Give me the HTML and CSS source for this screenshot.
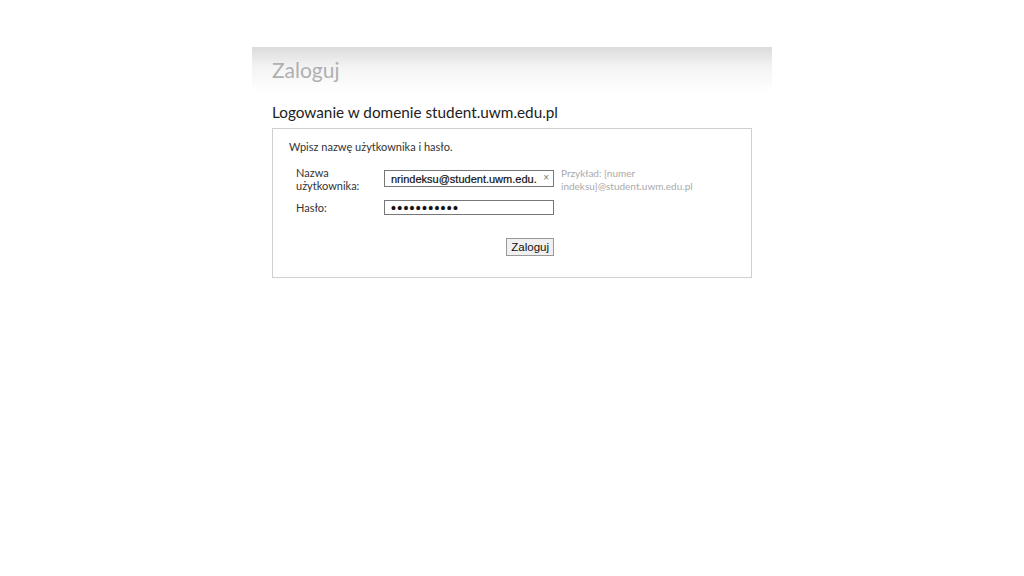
FILE: index.html
```html
<!DOCTYPE html>
<html lang="pl">
<head>
  <meta charset="UTF-8">
  <title>Zaloguj</title>
  <link rel="stylesheet" href="styles.css">
</head>
<body>

<div class="page">
  <div class="header">Zaloguj</div>

  <div class="content">
    <h2>Logowanie w domenie student.uwm.edu.pl</h2>

    <div class="box">
      <p class="intro">Wpisz nazwę użytkownika i hasło.</p>

      <div class="row">
        <label class="label" for="user">Nazwa<br>użytkownika:</label>
        <div class="field">
          <input type="text" id="user" value="nrindeksu@student.uwm.edu.pl">
          <span class="clear">×</span>
        </div>
        <div class="hint">Przykład: [numer<br>indeksu]@student.uwm.edu.pl</div>
      </div>

      <div class="row row-center">
        <label class="label" for="pass">Hasło:</label>
        <div class="field">
          <input type="password" id="pass" value="haslohaslo1">
        </div>
      </div>

      <div class="actions">
        <button type="submit">Zaloguj</button>
      </div>
    </div>
  </div>
</div>

</body>
</html>
```

FILE: styles.css
```css
* {
  box-sizing: border-box;
}
body {
  margin: 0;
  background: #fff;
  font-family: Lato, "Noto Sans", sans-serif;
  color: #222;
}
.page {
  width: 520px;
  margin: 47px auto 0;
}
.header {
  height: 46px;
  padding: 10px 20px 0;
  background: linear-gradient(to bottom, #dcdcdc 0%, #f4f4f4 45%, #fff 100%);
  font-size: 21px;
  color: #b0b0b0;
}
.content {
  padding: 0 20px;
}
h2 {
  margin: 10px 0 7px;
  font-size: 15.3px;
  font-weight: normal;
  color: #222;
}
.box {
  width: 480px;
  height: 150px;
  border: 1px solid #d0d0d0;
  padding: 11px 16px 0;
}
.intro {
  margin: 0 0 13px;
  font-size: 11px;
  color: #333;
}
.row {
  display: flex;
  align-items: flex-start;
  margin-bottom: 7px;
}
.row-center {
  align-items: center;
}
.label {
  width: 95px;
  padding-left: 7px;
  font-size: 11px;
  line-height: 13px;
  color: #333;
}
.field {
  position: relative;
  width: 170px;
  margin-top: 4px;
}
.row-center .field {
  margin-top: 0;
}
input {
  display: block;
  width: 170px;
  height: 17px;
  border: 1px solid #777;
  padding: 0 16px 0 6px;
  font-family: "Liberation Sans", Arial, sans-serif;
  font-size: 11px;
  color: #111;
  -webkit-text-stroke: 0.2px #111;
}
input[type="password"] {
  height: 15px;
  font-size: 14px;
  letter-spacing: 1.3px;
}
.clear {
  position: absolute;
  right: 5px;
  top: 2px;
  font-family: "Liberation Sans", Arial, sans-serif;
  font-size: 10px;
  color: #777;
}
.hint {
  margin-left: 7px;
  margin-top: 1px;
  font-size: 10px;
  line-height: 13px;
  color: #aaa;
}
.actions {
  width: 265px;
  margin-top: 23px;
  display: flex;
  justify-content: flex-end;
}
button {
  height: 18px;
  padding: 0 4px;
  border: 1px solid #999;
  background: #f0f0f0;
  font-family: "Liberation Sans", Arial, sans-serif;
  font-size: 11.5px;
  color: #111;
}
```
